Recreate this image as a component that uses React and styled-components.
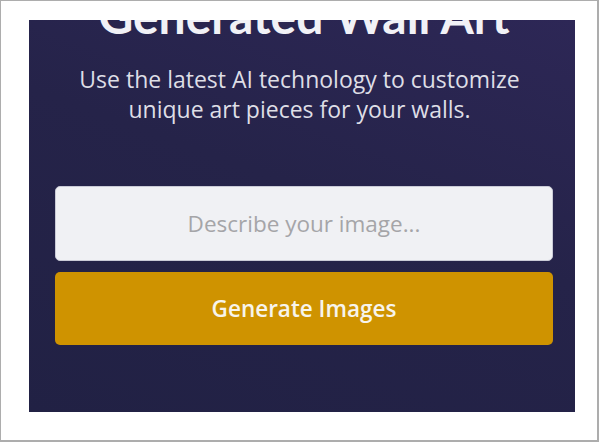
import React from 'react'
import styled, { createGlobalStyle } from "styled-components";

const GlobalStyle = createGlobalStyle`
    html, body {
        margin: 0;
        padding: 0;
        background: #ffffff;
    }
    * {
        box-sizing: border-box;
    }
`;

export default function App() {
  return (
    <>
      <GlobalStyle />
      <Frame>
        <Hero>
          <Title>Generated Wall Art</Title>
          <Subtitle>
            Use the latest AI technology to customize
            <br />
            unique art pieces for your walls.
          </Subtitle>
          <Form onSubmit={(e) => e.preventDefault()}>
            <PromptInput type="text" placeholder="Describe your image..." />
            <GenerateButton type="submit">Generate Images</GenerateButton>
          </Form>
        </Hero>
      </Frame>
    </>
  )
}

const Frame = styled.div`
    width: 599px;
    height: 442px;
    border: 2px solid #adadad;
    border-left-width: 1px;
    border-top-width: 1px;
    padding: 19px 22px 28px 28px;
    background: #ffffff;
`;

const Hero = styled.section`
    height: 100%;
    overflow: hidden;
    display: flex;
    flex-direction: column;
    align-items: center;
    padding: 0 22px 0 26px;
    background: linear-gradient(200deg, #2d2756 0%, #252349 45%, #212144 100%);
`;

const Title = styled.h1`
    margin: -33px 0 0;
    font-family: "Lato", "Liberation Sans", sans-serif;
    font-weight: 700;
    font-size: 48px;
    line-height: 1.2;
    color: #f1f1f6;
    text-align: center;
    white-space: nowrap;
`;

const Subtitle = styled.p`
    margin: 19px 0 0;
    padding-right: 9px;
    font-family: "Open Sans", "Liberation Sans", sans-serif;
    font-size: 23px;
    line-height: 30px;
    color: #dedee6;
    text-align: center;
    white-space: nowrap;
`;

const Form = styled.form`
    width: 100%;
    margin-top: 62px;
    display: flex;
    flex-direction: column;
    gap: 11px;
`;

const PromptInput = styled.input`
    width: 100%;
    height: 75px;
    border: 1px solid #c9cad6;
    border-radius: 5px;
    background: #f0f1f4;
    font-family: "Open Sans", "Liberation Sans", sans-serif;
    font-size: 22.5px;
    color: #333;
    text-align: center;
    outline: none;

    &::placeholder {
        color: #a5a5a8;
    }
`;

const GenerateButton = styled.button`
    width: 100%;
    height: 73px;
    border: none;
    border-radius: 5px;
    background: #cf9300;
    font-family: "Open Sans", "Liberation Sans", sans-serif;
    font-weight: 600;
    font-size: 22.5px;
    color: #f7f4ec;
    cursor: pointer;
`;
